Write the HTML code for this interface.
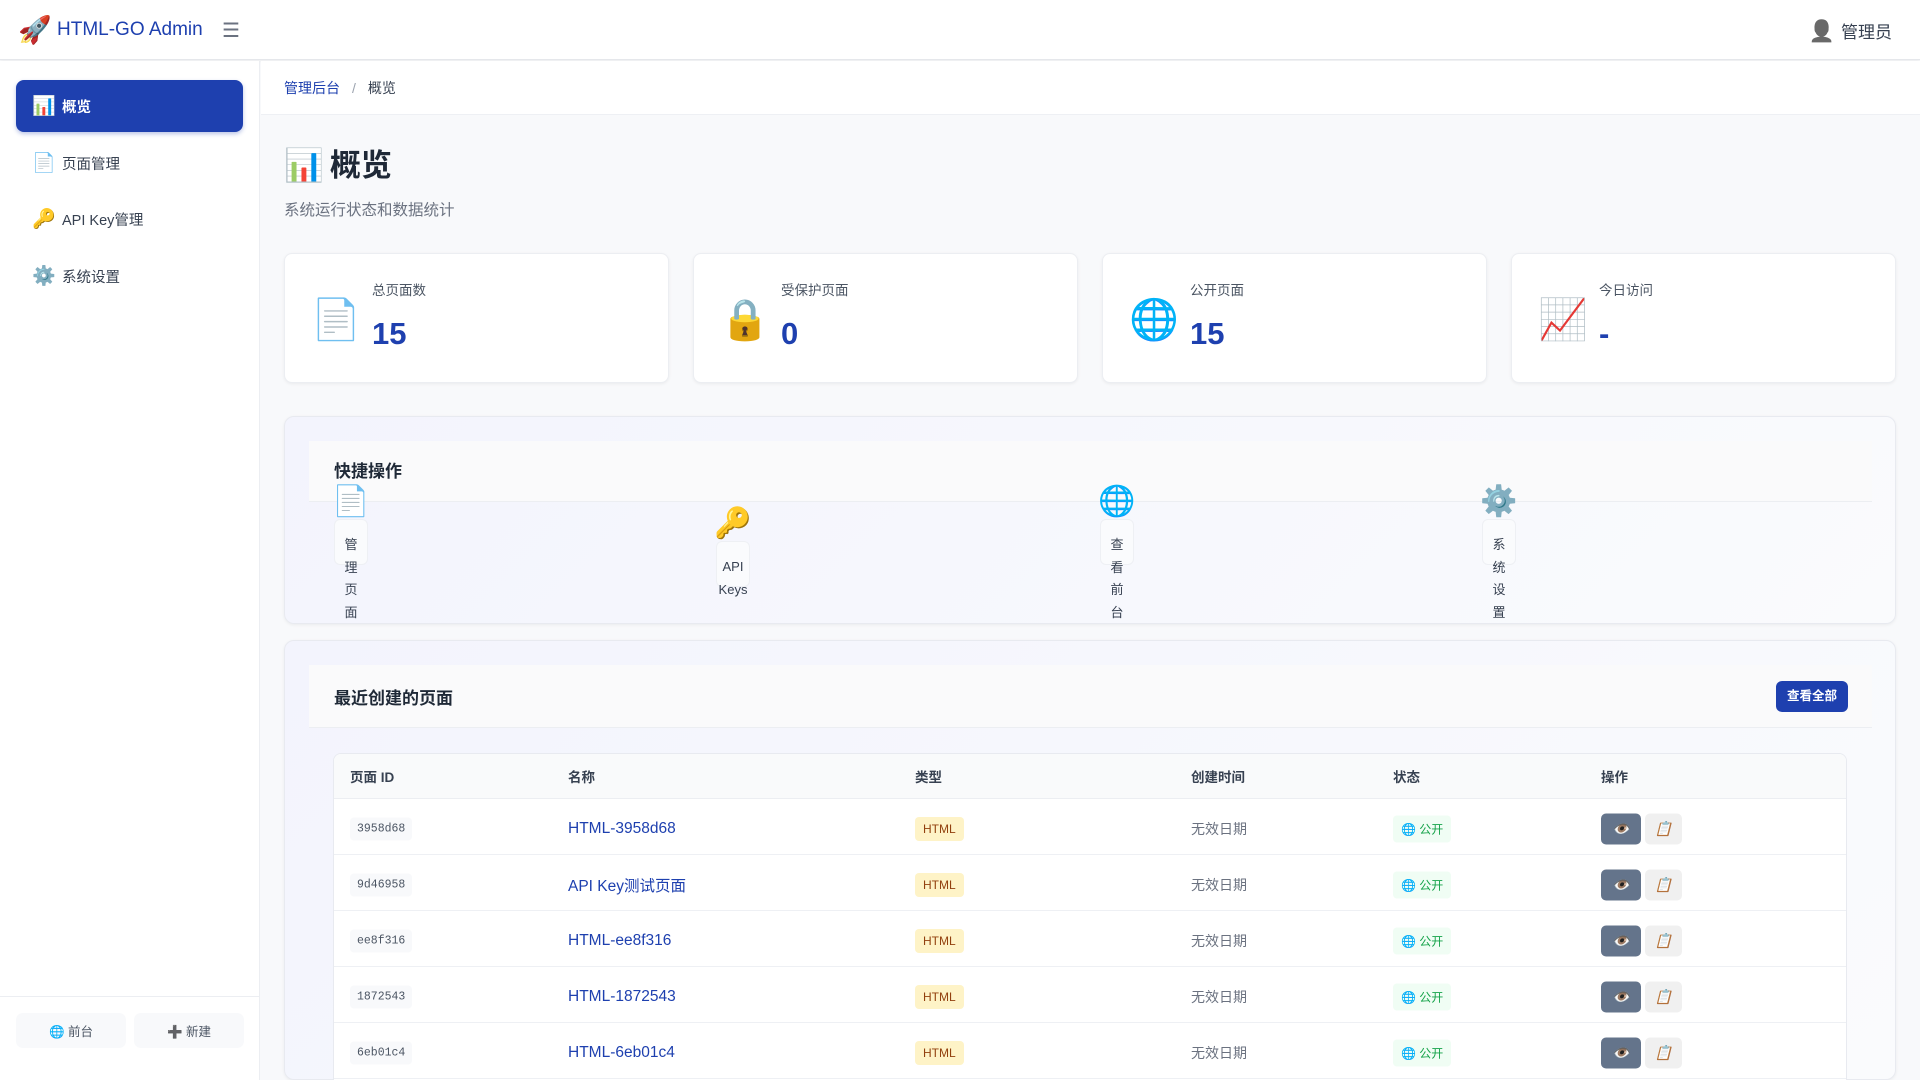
<!DOCTYPE html>
<html><head><meta charset="utf-8">
<style>
*{box-sizing:border-box;margin:0;padding:0}
html{width:1920px;height:1080px;overflow:hidden}
body{width:1920px;height:1080px;overflow:hidden;background:#f8f9fb;font-family:"Liberation Sans","Noto Sans CJK SC",sans-serif;color:#1f2937;position:relative}
.hdr{position:absolute;left:0;top:0;width:1920px;height:60px;background:#fff;border-bottom:1px solid #e5e7eb;box-shadow:0 1px 3px rgba(0,0,0,.06)}
.logo{position:absolute;left:18px;top:14px;font-size:27px;line-height:32px}
.brand{position:absolute;left:57px;top:19px;font-size:19px;color:#1e40af;font-weight:500}
.ham{position:absolute;left:222px;top:18px;font-size:20px;color:#6b7280}
.user{position:absolute;right:28px;top:18px;font-size:17px;color:#374151}
.user span{font-size:21px;margin-right:6px;filter:grayscale(1)}
.side{position:absolute;left:0;top:61px;width:260px;height:1019px;background:#fff;border-right:1px solid #eceef2}
.nav{position:absolute;left:16px;width:227px;height:52px;border-radius:8px;font-size:14.5px;color:#374151;display:flex;align-items:center;padding-left:16px}
.nav i{font-style:normal;font-size:19px;width:30px}
.nav.act{background:#1e40af;color:#fff;font-weight:bold;box-shadow:0 2px 4px rgba(30,64,175,.3)}
.sline{position:absolute;left:0;top:935px;width:259px;border-top:1px solid #eceef2}
.sbtn{position:absolute;top:952px;height:35px;width:110px;background:#f8f9fb;border-radius:7px;font-size:12.5px;color:#4b5563;display:flex;align-items:center;justify-content:center}
.bc{position:absolute;left:261px;top:61px;width:1659px;height:54px;background:#fff;border-bottom:1px solid #eef0f4;font-size:14px;padding:17px 23px;color:#374151}
.bc a{color:#1e40af}
.bc b{font-weight:normal;color:#9ca3af;margin:0 12px}
h1{position:absolute;left:284px;top:140px;font-size:31px;font-weight:bold;color:#1f2937}
h1 span{font-size:32px;margin-right:6px}
.sub{position:absolute;left:284px;top:198px;font-size:15.5px;color:#6b7280}
.card{position:absolute;top:253px;width:385px;height:130px;background:#fff;border:1px solid #eceef2;border-radius:8px;box-shadow:0 1px 3px rgba(0,0,0,.06)}
.card .ic{position:absolute;left:26px;top:42px;font-size:40px;line-height:48px}
.card .lb{position:absolute;left:87px;top:25px;font-size:13.5px;color:#4b5563}
.card .nm{position:absolute;left:87px;top:62px;font-size:31px;font-weight:bold;color:#1e40af}
.panel{position:absolute;left:284px;width:1612px;background:linear-gradient(135deg,#f3f4fd,#fafbfd);border:1px solid #e8eaf0;border-radius:10px;box-shadow:0 1px 3px rgba(0,0,0,.06)}
.ph{position:absolute;left:24px;width:1563px;background:#fafafb;border-bottom:1px solid #eceef2}
.ph h3{position:absolute;left:25px;font-size:17px;font-weight:bold;color:#1f2937}
.qa{position:absolute;display:flex;flex-direction:column;align-items:center;width:34px}
.qa .e{font-size:30px;line-height:34px}
.qa .t{width:34px;height:46px;background:#fafbfd;border:1px solid #eef0f4;border-radius:6px;font-size:13px;line-height:22.5px;text-align:center;color:#374151;padding:14px 9px 0;word-break:break-all}
.tbl{position:absolute;left:333px;top:753px;width:1514px;height:340px;background:#fff;border:1px solid #e8eaf0;border-radius:8px;overflow:hidden}
.th{height:45px;background:#f9fafb;border-bottom:1px solid #eceef2;position:relative;font-size:13.5px;font-weight:bold;color:#374151}
.th span,.tr span{position:absolute;top:50%;transform:translateY(-50%)}
.tr{height:56px;border-bottom:1px solid #eef0f4;position:relative;font-size:14px}
.tr span{margin-top:2px}
.id{font-family:"Liberation Mono",monospace;font-size:11.5px;color:#4b5563;background:#f8f9fb;padding:5px 7px;border-radius:4px}
.name{color:#1e40af;font-size:15.5px}
.tag{background:#fef3c7;color:#92400e;font-size:12px;padding:5px 8px;border-radius:4px}
.dt{color:#6b7280}
.pub{background:#f0fdf4;color:#16a34a;font-size:12px;padding:5px 8px;border-radius:4px}
.b1{display:inline-block;width:40px;height:31px;background:#64748b;border-radius:5px;text-align:center;line-height:31px;font-size:14px}
.b2{display:inline-block;width:37px;height:31px;background:#f0f0f0;border-radius:5px;text-align:center;line-height:31px;font-size:14px;margin-left:4px}
</style></head><body>
<div class="hdr">
<div class="logo">🚀</div><div class="brand">HTML-GO Admin</div><div class="ham">☰</div>
<div class="user"><span>👤</span>管理员</div>
</div>
<div class="side">
<div class="nav act" style="top:19px"><i>📊</i>概览</div>
<div class="nav" style="top:76px"><i>📄</i>页面管理</div>
<div class="nav" style="top:132px"><i>🔑</i>API Key管理</div>
<div class="nav" style="top:189px"><i>⚙️</i>系统设置</div>
<div class="sline"></div>
<div class="sbtn" style="left:16px">🌐&nbsp;前台</div>
<div class="sbtn" style="left:134px">➕&nbsp;新建</div>
</div>
<div class="bc"><a>管理后台</a><b>/</b>概览</div>
<h1><span>📊</span>概览</h1>
<div class="sub">系统运行状态和数据统计</div>
<div class="card" style="left:284px"><div class="ic">📄</div><div class="lb">总页面数</div><div class="nm">15</div></div>
<div class="card" style="left:693px"><div class="ic">🔒</div><div class="lb">受保护页面</div><div class="nm">0</div></div>
<div class="card" style="left:1102px"><div class="ic">🌐</div><div class="lb">公开页面</div><div class="nm">15</div></div>
<div class="card" style="left:1511px"><div class="ic">📈</div><div class="lb">今日访问</div><div class="nm">-</div></div>

<div class="panel" style="top:416px;height:208px">
<div class="ph" style="top:24px;height:61px"><h3 style="top:16px">快捷操作</h3></div>
<div class="qa" style="left:49px;top:68px"><div class="e">📄</div><div class="t">管理页面</div></div>
<div class="qa" style="left:431px;top:90px"><div class="e">🔑</div><div class="t" style="padding:14px 0 0;word-break:normal">API Keys</div></div>
<div class="qa" style="left:815px;top:68px"><div class="e">🌐</div><div class="t">查看前台</div></div>
<div class="qa" style="left:1197px;top:68px"><div class="e">⚙️</div><div class="t">系统设置</div></div>
</div>

<div class="panel" style="top:640px;height:440px">
<div class="ph" style="top:24px;height:63px"><h3 style="top:19px">最近创建的页面</h3>
<div style="position:absolute;left:1467px;top:16px;width:72px;height:31px;background:#1e40af;color:#fff;border-radius:6px;font-size:12.5px;font-weight:bold;text-align:center;line-height:31px">查看全部</div></div>
</div>
<div class="tbl">
<div class="th"><span style="left:16px">页面 ID</span><span style="left:234px">名称</span><span style="left:581px">类型</span><span style="left:857px">创建时间</span><span style="left:1059px">状态</span><span style="left:1267px">操作</span></div>
<div class="tr"><span style="left:16px" class="id">3958d68</span><span style="left:234px" class="name">HTML-3958d68</span><span style="left:581px" class="tag">HTML</span><span style="left:857px" class="dt">无效日期</span><span style="left:1059px" class="pub">🌐 公开</span><span style="left:1267px"><i class="b1">👁️</i><i class="b2">📋</i></span></div>
<div class="tr"><span style="left:16px" class="id">9d46958</span><span style="left:234px" class="name">API Key测试页面</span><span style="left:581px" class="tag">HTML</span><span style="left:857px" class="dt">无效日期</span><span style="left:1059px" class="pub">🌐 公开</span><span style="left:1267px"><i class="b1">👁️</i><i class="b2">📋</i></span></div>
<div class="tr"><span style="left:16px" class="id">ee8f316</span><span style="left:234px" class="name">HTML-ee8f316</span><span style="left:581px" class="tag">HTML</span><span style="left:857px" class="dt">无效日期</span><span style="left:1059px" class="pub">🌐 公开</span><span style="left:1267px"><i class="b1">👁️</i><i class="b2">📋</i></span></div>
<div class="tr"><span style="left:16px" class="id">1872543</span><span style="left:234px" class="name">HTML-1872543</span><span style="left:581px" class="tag">HTML</span><span style="left:857px" class="dt">无效日期</span><span style="left:1059px" class="pub">🌐 公开</span><span style="left:1267px"><i class="b1">👁️</i><i class="b2">📋</i></span></div>
<div class="tr"><span style="left:16px" class="id">6eb01c4</span><span style="left:234px" class="name">HTML-6eb01c4</span><span style="left:581px" class="tag">HTML</span><span style="left:857px" class="dt">无效日期</span><span style="left:1059px" class="pub">🌐 公开</span><span style="left:1267px"><i class="b1">👁️</i><i class="b2">📋</i></span></div>
</div>
</body></html>
